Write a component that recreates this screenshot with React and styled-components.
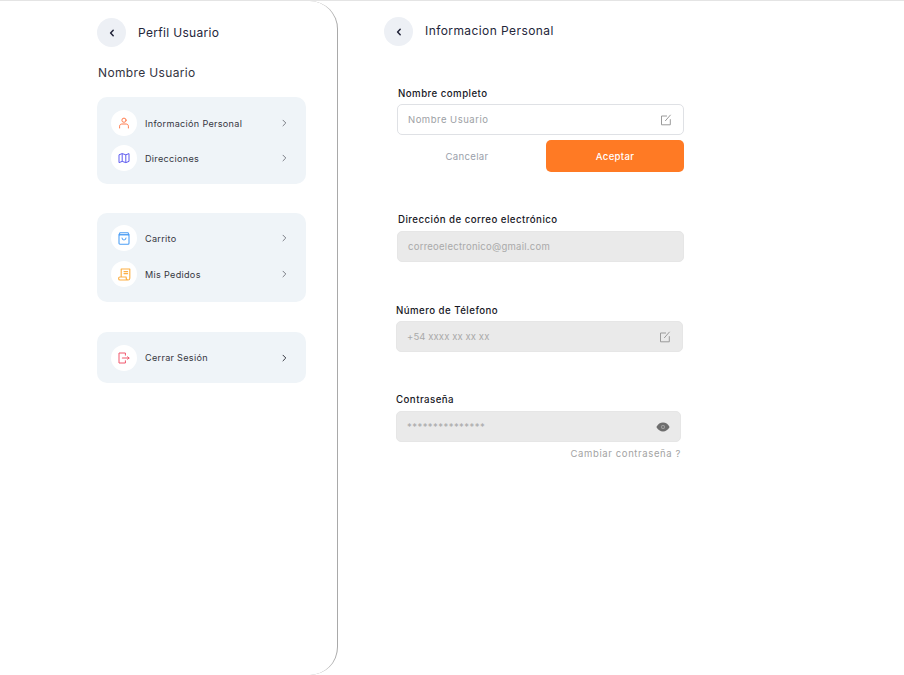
import React from 'react';
import styled, { createGlobalStyle } from 'styled-components';

const GlobalStyle = createGlobalStyle`
  html, body {
    margin: 0;
    padding: 0;
    background: #fff;
    font-family: "Inter", "Liberation Sans", sans-serif;
  }
  * { box-sizing: border-box; }
`;

const Page = styled.div`
  width: 904px;
  height: 675px;
  display: flex;
  overflow: hidden;
  border-top: 1px solid #e4e4e4;
`;

const Sidebar = styled.aside`
  width: 338px;
  height: 674px;
  flex: none;
  padding: 17px 31px 0 97px;
  border-right: 1px solid #a9a9a9;
  border-radius: 0 28px 28px 0;
`;

const Header = styled.div`
  display: flex;
  align-items: center;
  gap: 12px;
`;

const BackButton = styled.div`
  width: 29px;
  height: 29px;
  border-radius: 50%;
  background: #edf0f5;
  display: flex;
  align-items: center;
  justify-content: center;
  flex: none;
`;

const Title = styled.h1`
  margin: 0;
  font-size: 12px;
  font-weight: 400;
  letter-spacing: 0.32px;
  color: #24263a;
`;

const UserName = styled.div`
  margin: 17px 0 16px 1px;
  height: 17px;
  line-height: 17px;
  font-size: 12px;
  letter-spacing: 0.35px;
  color: #33343f;
`;

const Card = styled.div`
  width: 209px;
  height: ${p => p.$height}px;
  margin-bottom: ${p => p.$gap}px;
  padding: 0 18px ${p => p.$bottom || 0}px 14px;
  border-radius: 10px;
  background: #eff4f8;
  display: flex;
  flex-direction: column;
  justify-content: center;
  gap: ${p => p.$rowGap || 0}px;
`;

const Row = styled.div`
  display: flex;
  align-items: center;
  height: 26px;
`;

const IconCircle = styled.div`
  width: 26px;
  height: 26px;
  border-radius: 50%;
  background: #fff;
  display: flex;
  align-items: center;
  justify-content: center;
  flex: none;
`;

const RowLabel = styled.span`
  flex: 1;
  margin-left: 8px;
  font-size: 9.1px;
  letter-spacing: 0.3px;
  color: #35363f;
`;

const Main = styled.main`
  flex: 1;
  padding: 16px 0 0 46px;
`;

const MainTitle = styled(Title)`
  letter-spacing: 0.42px;
  margin-bottom: 2px;
`;

const Form = styled.div`
  margin-top: 40px;
`;

const Field = styled.div`
  width: ${p => p.$width || 287}px;
  margin-left: ${p => p.$left}px;
  margin-bottom: ${p => p.$gap || 0}px;
`;

const Label = styled.label`
  display: block;
  height: 16px;
  line-height: 16px;
  margin: 0 0 ${p => p.$gap}px ${p => p.$inset ?? 1}px;
  font-size: 9.7px;
  font-weight: 500;
  letter-spacing: 0.45px;
  color: #17181f;
`;

const InputBox = styled.div`
  height: 31px;
  padding: 0 ${p => p.$right || 11}px 0 10px;
  display: flex;
  align-items: center;
  justify-content: space-between;
  border-radius: 5px;
  border: 1px solid ${p => (p.$filled ? '#e6e6e6' : '#dfe1e5')};
  background: ${p => (p.$filled ? '#eaeaea' : '#fff')};
`;

const InputText = styled.span`
  font-size: 9.5px;
  letter-spacing: ${p => p.$spacing || 0.5}px;
  color: ${p => (p.$filled ? '#a9a9a9' : '#9d9fa5')};
`;

const Buttons = styled.div`
  display: flex;
  margin-top: 5px;
`;

const CancelButton = styled.div`
  flex: 1;
  height: 32px;
  padding-right: 9px;
  display: flex;
  align-items: center;
  justify-content: center;
  font-size: 9.6px;
  letter-spacing: 0.3px;
  color: #9a9fab;
`;

const AcceptButton = styled.div`
  width: 138px;
  height: 32px;
  margin-bottom: 1px;
  border-radius: 5px;
  background: #ff7a24;
  display: flex;
  align-items: center;
  justify-content: center;
  font-size: 9.6px;
  font-weight: 500;
  letter-spacing: 0.3px;
  color: #fff;
`;

const ChangeLink = styled.div`
  margin-top: 6px;
  text-align: right;
  font-size: 9.5px;
  letter-spacing: 0.62px;
  color: #a3a3a3;
`;

const Back = () => (
  <BackButton>
    <svg width="10" height="10" viewBox="0 0 10 10" fill="none" stroke="#23253a" strokeWidth="1.5" strokeLinecap="round" strokeLinejoin="round">
      <path d="M6.2 2.2 3.6 5l2.6 2.8" />
    </svg>
  </BackButton>
);

const Chevron = ({ color = '#7b7d85' }) => (
  <svg width="7" height="8" viewBox="0 0 7 8" fill="none" stroke={color} strokeWidth="1" strokeLinecap="round" strokeLinejoin="round">
    <path d="M2 1.2 4.8 4 2 6.8" />
  </svg>
);

const EditIcon = () => (
  <svg width="12" height="12" viewBox="0 0 12 12" fill="none" stroke="#9a9a9a" strokeWidth="1">
    <path d="M7 2H1.5v8.8h8.8V5.2" />
    <path d="M5.2 7 10.6.8" />
  </svg>
);

const UserIcon = () => (
  <svg width="12" height="12" viewBox="0 0 12 12" fill="none" stroke="#ff7d4f" strokeWidth="1" strokeLinecap="round">
    <circle cx="6" cy="3.2" r="2.1" />
    <path d="M1.6 11V9.2c0-1.3 1-2.2 2.2-2.2h4.4c1.2 0 2.2.9 2.2 2.2V11" />
  </svg>
);

const MapIcon = () => (
  <svg width="12" height="12" viewBox="0 0 12 12" fill="none" stroke="#5f5cf0" strokeWidth="1" strokeLinejoin="round">
    <path d="M1 2.8 4.2 1.6 7.8 2.8 11 1.6v7.8L7.8 10.6 4.2 9.4 1 10.6Z" />
    <path d="M4.2 1.6v7.8M7.8 2.8v7.8" />
  </svg>
);

const BagIcon = () => (
  <svg width="12" height="13" viewBox="0 0 12 13" fill="none" stroke="#4e9ff5" strokeWidth="1.1" strokeLinecap="round">
    <rect x="1" y="2.8" width="10" height="9.4" rx="1" />
    <path d="M2 .8h8L11 2.8H1Z" />
    <path d="M4 6c.3 1.4 1.1 2 2 2s1.7-.6 2-2" />
  </svg>
);

const OrdersIcon = () => (
  <svg width="13" height="13" viewBox="0 0 13 13" fill="none" stroke="#fdb044" strokeWidth="1.15" strokeLinecap="round" strokeLinejoin="round">
    <path d="M3.2 9V1h8.6v9.2c0 1-.7 1.8-1.7 1.8H2.2C1.2 12 .6 11.2.6 10.4c0-.8.5-1.4 1.3-1.4h6.3v1c0 1 .7 2 1.9 2" />
    <path d="M6 3.6h3.6M6 5.6h3.6" />
  </svg>
);

const LogoutIcon = () => (
  <svg width="12" height="12" viewBox="0 0 12 12" fill="none" stroke="#f0566c" strokeWidth="1" strokeLinecap="round" strokeLinejoin="round">
    <path d="M7.4 3.2V1H1v10h6.4V8.8" />
    <path d="M4.4 6H11" strokeWidth="1.2" />
    <path d="M9.6 4.8 11 6 9.6 7.2" />
  </svg>
);

const EyeIcon = () => (
  <svg width="14" height="10" viewBox="0 0 14 10">
    <path d="M0.4 5C2 2 4.3.6 7 .6S12 2 13.6 5C12 8 9.7 9.4 7 9.4S2 8 .4 5Z" fill="#6e6e6e" />
    <circle cx="7" cy="5" r="2" fill="#a5a5a5" />
    <circle cx="7" cy="5" r="1.1" fill="#6e6e6e" />
  </svg>
);

export default function App() {
  return (
    <>
      <GlobalStyle />
      <Page>
        <Sidebar>
          <Header>
            <Back />
            <Title>Perfil Usuario</Title>
          </Header>
          <UserName>Nombre Usuario</UserName>

          <Card $height={87} $gap={29} $rowGap={9}>
            <Row>
              <IconCircle><UserIcon /></IconCircle>
              <RowLabel>Información Personal</RowLabel>
              <Chevron />
            </Row>
            <Row>
              <IconCircle><MapIcon /></IconCircle>
              <RowLabel>Direcciones</RowLabel>
              <Chevron />
            </Row>
          </Card>

          <Card $height={89} $gap={30} $rowGap={10} $bottom={3}>
            <Row>
              <IconCircle><BagIcon /></IconCircle>
              <RowLabel>Carrito</RowLabel>
              <Chevron />
            </Row>
            <Row>
              <IconCircle><OrdersIcon /></IconCircle>
              <RowLabel>Mis Pedidos</RowLabel>
              <Chevron />
            </Row>
          </Card>

          <Card $height={51} $gap={0}>
            <Row>
              <IconCircle><LogoutIcon /></IconCircle>
              <RowLabel>Cerrar Sesión</RowLabel>
              <Chevron color="#35363f" />
            </Row>
          </Card>
        </Sidebar>

        <Main>
          <Header>
            <Back />
            <MainTitle>Informacion Personal</MainTitle>
          </Header>

          <Form>
            <Field $left={13} $gap={39}>
              <Label $gap={2}>Nombre completo</Label>
              <InputBox>
                <InputText>Nombre Usuario</InputText>
                <EditIcon />
              </InputBox>
              <Buttons>
                <CancelButton>Cancelar</CancelButton>
                <AcceptButton>Aceptar</AcceptButton>
              </Buttons>
            </Field>

            <Field $left={13} $gap={41}>
              <Label $gap={3}>Dirección de correo electrónico</Label>
              <InputBox $filled>
                <InputText $filled $spacing={0.26}>correoelectronico@gmail.com</InputText>
              </InputBox>
            </Field>

            <Field $left={12} $gap={40}>
              <Label $gap={2} $inset={0}>Número de Télefono</Label>
              <InputBox $filled>
                <InputText $filled $spacing={0.1}>+54 xxxx xx xx xx</InputText>
                <EditIcon />
              </InputBox>
            </Field>

            <Field $left={12} $width={285}>
              <Label $gap={3} $inset={0}>Contraseña</Label>
              <InputBox $filled $right={10}>
                <InputText $filled $spacing={0.45}>***************</InputText>
                <EyeIcon />
              </InputBox>
              <ChangeLink>Cambiar contraseña ?</ChangeLink>
            </Field>
          </Form>
        </Main>
      </Page>
    </>
  );
}
